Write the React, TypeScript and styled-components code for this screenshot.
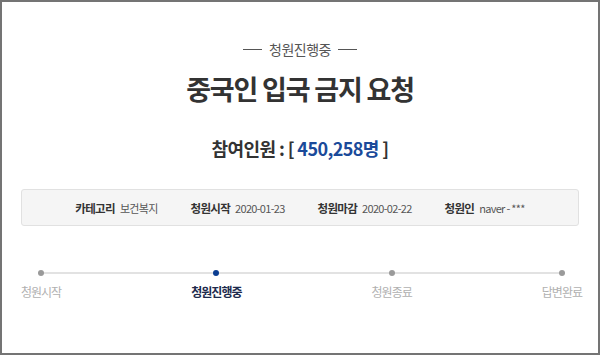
import React from "react"
import styled, { createGlobalStyle } from "styled-components"

const COLORS = {
  FRAME: "#747474",
  TEXT: "#333333",
  SUB: "#555555",
  BLUE: "#1b4a9a",
  NAVY: "#1e2b4d",
  MUTED: "#b0b0b0",
  DOT: "#9a9a9a",
  LINE: "#e2e2e2",
  BOX: "#f5f5f5",
  BOX_BORDER: "#e1e1e1",
}

const GlobalStyle = createGlobalStyle`
  html, body {
    margin: 0;
    padding: 0;
    background: #ffffff;
  }
  body {
    font-family: "Noto Sans CJK KR", "Noto Sans", sans-serif;
    color: ${COLORS.TEXT};
  }
`

const Frame = styled.div`
  box-sizing: border-box;
  width: 600px;
  height: 355px;
  border: 2px solid ${COLORS.FRAME};
  background: #ffffff;
  display: flex;
  flex-direction: column;
  align-items: center;
  padding: 38px 19px 0 19px;
`

const Status = styled.div`
  display: flex;
  align-items: center;
  gap: 7px;
  font-size: 14px;
  line-height: 18px;
  color: ${COLORS.SUB};
  letter-spacing: -0.5px;

  &::before,
  &::after {
    content: "";
    display: block;
    width: 19px;
    height: 1px;
    background: ${COLORS.SUB};
  }
`

const Title = styled.h1`
  margin: 15px 0 0 0;
  font-size: 27px;
  line-height: 32px;
  font-weight: 700;
  letter-spacing: -1.2px;
  color: ${COLORS.TEXT};
`

const Count = styled.div`
  margin-top: 31px;
  font-size: 18px;
  line-height: 24px;
  font-weight: 700;
  letter-spacing: -0.6px;
  color: ${COLORS.TEXT};
`

const CountNumber = styled.span`
  color: ${COLORS.BLUE};
`

const InfoBox = styled.div`
  box-sizing: border-box;
  margin-top: 29px;
  width: 100%;
  height: 37px;
  background: ${COLORS.BOX};
  border: 1px solid ${COLORS.BOX_BORDER};
  border-radius: 3px;
  display: flex;
  align-items: center;
  justify-content: center;
  gap: 33px;
`

const InfoItem = styled.div`
  display: flex;
  align-items: baseline;
  gap: 5px;
  font-size: 11.5px;
  line-height: 16px;
  letter-spacing: -0.7px;
`

const InfoLabel = styled.span`
  font-weight: 700;
  color: ${COLORS.TEXT};
`

const InfoValue = styled.span`
  font-size: 11px;
  color: ${COLORS.SUB};
`

const Steps = styled.div`
  position: relative;
  align-self: stretch;
  margin: 44px -3px 0 0;
  display: flex;
  justify-content: space-between;

  &::before {
    content: "";
    position: absolute;
    top: 2px;
    left: 17px;
    right: 20px;
    height: 2px;
    background: ${COLORS.LINE};
  }
`

const Step = styled.div`
  display: flex;
  flex-direction: column;
  align-items: center;
  gap: 8px;
`

const Dot = styled.span<{ $active?: boolean }>`
  position: relative;
  width: 6px;
  height: 6px;
  border-radius: 50%;
  background: ${(p) => (p.$active ? "#0a3d91" : COLORS.DOT)};
`

const StepLabel = styled.span<{ $active?: boolean }>`
  font-size: 12px;
  line-height: 16px;
  letter-spacing: -1px;
  font-weight: ${(p) => (p.$active ? 700 : 400)};
  color: ${(p) => (p.$active ? COLORS.NAVY : COLORS.MUTED)};
`

const info = [
  { label: "카테고리", value: "보건복지" },
  { label: "청원시작", value: "2020-01-23" },
  { label: "청원마감", value: "2020-02-22" },
  { label: "청원인", value: "naver - ***" },
]

const steps = ["청원시작", "청원진행중", "청원종료", "답변완료"]

const App: React.FC = () => (
  <>
    <GlobalStyle />
    <Frame>
      <Status>청원진행중</Status>
      <Title>중국인 입국 금지 요청</Title>
      <Count>
        참여인원 : [ <CountNumber>450,258명</CountNumber> ]
      </Count>
      <InfoBox>
        {info.map((item) => (
          <InfoItem key={item.label}>
            <InfoLabel>{item.label}</InfoLabel>
            <InfoValue>{item.value}</InfoValue>
          </InfoItem>
        ))}
      </InfoBox>
      <Steps>
        {steps.map((s, i) => (
          <Step key={s}>
            <Dot $active={i === 1} />
            <StepLabel $active={i === 1}>{s}</StepLabel>
          </Step>
        ))}
      </Steps>
    </Frame>
  </>
)

export default App
